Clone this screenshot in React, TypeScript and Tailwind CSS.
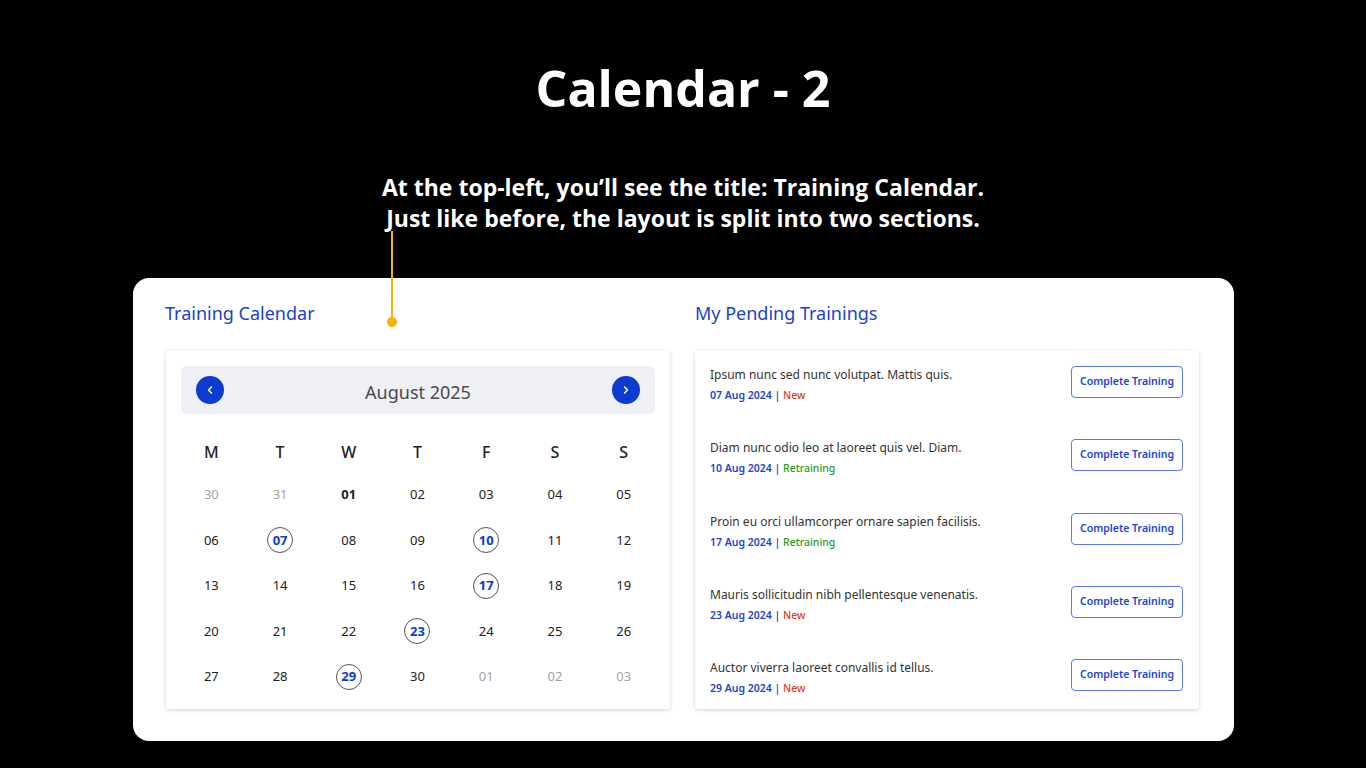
import { ChevronLeft, ChevronRight } from 'lucide-react';

type Day = { label: string; muted?: boolean; bold?: boolean; marked?: boolean };

const weekDays = ['M', 'T', 'W', 'T', 'F', 'S', 'S'];

const marked = [7, 10, 17, 23, 29];

const days: Day[] = [
  { label: '30', muted: true },
  { label: '31', muted: true },
  ...Array.from({ length: 30 }, (_, i) => ({
    label: String(i + 1).padStart(2, '0'),
    bold: i === 0,
    marked: marked.includes(i + 1),
  })),
  { label: '01', muted: true },
  { label: '02', muted: true },
  { label: '03', muted: true },
];

const trainings = [
  { title: 'Ipsum nunc sed nunc volutpat. Mattis quis.', date: '07 Aug 2024', status: 'New' },
  { title: 'Diam nunc odio leo at laoreet quis vel. Diam.', date: '10 Aug 2024', status: 'Retraining' },
  { title: 'Proin eu orci ullamcorper ornare sapien facilisis.', date: '17 Aug 2024', status: 'Retraining' },
  { title: 'Mauris sollicitudin nibh pellentesque venenatis.', date: '23 Aug 2024', status: 'New' },
  { title: 'Auctor viverra laoreet convallis id tellus.', date: '29 Aug 2024', status: 'New' },
];

function Calendar() {
  return (
    <div className="h-[358px] rounded-[3px] bg-white pt-[15px] shadow-[0_1px_4px_rgba(0,0,0,0.18)]">
      <div className="mx-[15px] flex h-[48px] items-center justify-between rounded-md bg-[#eef0f5] px-[15px]">
        <button className="flex h-[28px] w-[28px] items-center justify-center rounded-full bg-[#0b3bcf] text-white">
          <ChevronLeft size={12} strokeWidth={3} />
        </button>
        <span className="pt-[4px] text-[18px] text-[#4a4a4a]">August 2025</span>
        <button className="flex h-[28px] w-[28px] items-center justify-center rounded-full bg-[#0b3bcf] text-white">
          <ChevronRight size={12} strokeWidth={3} />
        </button>
      </div>

      <div className="ml-[11px] mr-[12px] mt-[18px] grid grid-cols-7">
        {weekDays.map((d, i) => (
          <div key={i} className="flex h-[40px] items-center justify-center text-[16px] font-medium text-[#222]">
            {d}
          </div>
        ))}
        {days.map((d, i) => (
          <div key={i} className="flex h-[45.5px] items-center justify-center">
            {d.marked ? (
              <span className="flex h-[26px] w-[26px] items-center justify-center rounded-full border border-[#555] text-[13px] font-bold text-[#0b3bcf]">
                {d.label}
              </span>
            ) : (
              <span
                className={
                  'text-[13px] ' +
                  (d.muted ? 'text-[#a3a3a3]' : 'text-[#222]') +
                  (d.bold ? ' font-bold' : '')
                }
              >
                {d.label}
              </span>
            )}
          </div>
        ))}
      </div>
    </div>
  );
}

function PendingList() {
  return (
    <div className="flex h-[358px] flex-col gap-[37.3px] rounded-[3px] bg-white px-[15px] pt-[15px] shadow-[0_1px_4px_rgba(0,0,0,0.18)]">
      {trainings.map((t, i) => (
        <div key={i} className="flex items-start justify-between">
          <div>
            <div className="text-[12px] leading-[18px] text-[#333]">{t.title}</div>
            <div className="mt-[4px] text-[10.5px] font-semibold leading-[14px] text-[#1d44d4]">
              {t.date} |{' '}
              <span className={t.status === 'New' ? 'font-medium text-[#d9430f]' : 'font-medium text-[#2c9a1c]'}>
                {t.status}
              </span>
            </div>
          </div>
          <button className="mr-px h-[32px] w-[112px] rounded-[4px] border border-[#5a7ae6] text-[10.5px] font-semibold text-[#1d44d4]">
            Complete Training
          </button>
        </div>
      ))}
    </div>
  );
}

export default function App() {
  return (
    <div className="relative h-[768px] w-full overflow-hidden bg-black" style={{ fontFamily: '"Noto Sans", sans-serif' }}>
      <div className="flex flex-col items-center">
        <h1
          className="mt-[58px] text-[50px] font-bold leading-[60px] text-white"
          style={{ fontFamily: '"Open Sans", sans-serif' }}
        >
          Calendar - 2
        </h1>
        <p
          className="mt-[54px] text-center text-[23px] font-bold leading-[31px] text-white"
          style={{ fontFamily: '"Open Sans", sans-serif' }}
        >
          At the top-left, you’ll see the title: Training Calendar.
          <br />
          Just like before, the layout is split into two sections.
        </p>
      </div>

      <div className="ml-[133px] mt-[44px] w-[1101px] rounded-[16px] bg-white pb-[32px] pl-[33px] pr-[35px] pt-[24px]">
        <div className="grid grid-cols-2 gap-[25px]">
          <div>
            <h2 className="-ml-px text-[18px] leading-[22px] text-[#1a3fcf]">Training Calendar</h2>
            <div className="mt-[27px]">
              <Calendar />
            </div>
          </div>
          <div>
            <h2 className="text-[18px] leading-[22px] text-[#1a3fcf]">My Pending Trainings</h2>
            <div className="mt-[27px]">
              <PendingList />
            </div>
          </div>
        </div>
      </div>

      {/* annotation pointer */}
      <div className="absolute left-[390.5px] top-[231px] h-[90px] w-[2px] bg-[#f5b400]" />
      <div className="absolute left-[386.5px] top-[317px] h-[10px] w-[10px] rounded-full bg-[#f5b400]" />
    </div>
  );
}
